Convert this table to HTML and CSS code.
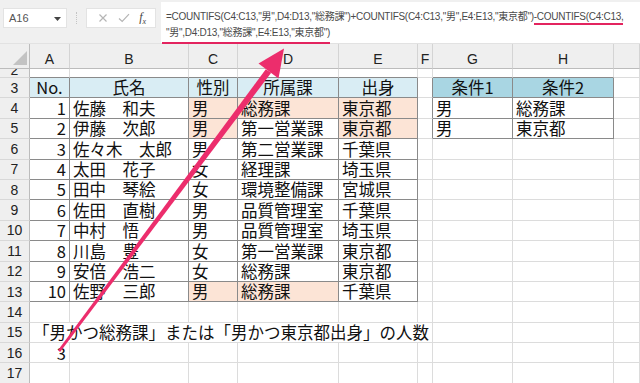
FILE: index.html
```html
<!DOCTYPE html>
<html lang="ja">
<head>
<meta charset="utf-8">
<link rel="stylesheet" href="styles.css">
</head>
<body>
<div class="app">
  <div class="bar">
    <div class="namebox"><span>A16</span><svg class="dd" width="7" height="4" viewBox="0 0 7 4"><path d="M0 0H7L3.5 4Z" fill="#444"/></svg></div>
    <div class="grip"></div>
    <div class="fxbox">
      <svg width="10" height="10" viewBox="0 0 10 10"><path d="M1.5 1.5L8.5 8.5M8.5 1.5L1.5 8.5" stroke="#b5b5b5" stroke-width="1.2"/></svg>
      <svg width="12" height="10" viewBox="0 0 12 10"><path d="M1 5.5L4.2 8.5L11 1.2" stroke="#b5b5b5" stroke-width="1.2" fill="none"/></svg>
      <span class="fx"><i>f</i><sub>x</sub></span>
    </div>
    <div class="formula">
      <div class="fl">=COUNTIFS(C4:C13,"男",D4:D13,"総務課")+COUNTIFS(C4:C13,"男",E4:E13,"東京都")<span class="ul">-COUNTIFS(C4:C13,</span></div>
      <div class="fl"><span class="ul ul2">"男",D4:D13,"総務課",E4:E13,"東京都")</span></div>
    </div>
  </div>

  <div class="sheet">
    <!-- header row -->
    <div class="h corner"><svg width="14" height="14" viewBox="0 0 14 14"><path d="M14 0V14H0Z" fill="#c3c3c3"/></svg></div>
    <div class="h">A</div><div class="h">B</div><div class="h">C</div><div class="h">D</div><div class="h">E</div><div class="h">F</div><div class="h">G</div><div class="h">H</div><div class="h"></div>

    <!-- row 2 (partly hidden) -->
    <div class="r part"><span>2</span></div>
    <div class="c tt"></div><div class="c tt"></div><div class="c tt"></div><div class="c tt"></div><div class="c tt"></div><div class="c"></div><div class="c tt"></div><div class="c tt"></div><div class="c"></div>

    <!-- row 3 -->
    <div class="r">3</div>
    <div class="c t hd1 ctr">No.</div><div class="c t hd1 ctr">氏名</div><div class="c t hd1 ctr">性別</div><div class="c t hd1 ctr">所属課</div><div class="c t hd1 ctr">出身</div>
    <div class="c tl"></div><div class="c t hd2 ctr">条件1</div><div class="c t hd2 ctr">条件2</div><div class="c"></div>

    <!-- row 4 -->
    <div class="r">4</div>
    <div class="c t num">1</div><div class="c t">佐藤　和夫</div><div class="c t pk">男</div><div class="c t pk">総務課</div><div class="c t pk">東京都</div>
    <div class="c tl"></div><div class="c t">男</div><div class="c t">総務課</div><div class="c"></div>

    <!-- row 5 -->
    <div class="r">5</div>
    <div class="c t num">2</div><div class="c t">伊藤　次郎</div><div class="c t pk">男</div><div class="c t">第一営業課</div><div class="c t pk">東京都</div>
    <div class="c tl"></div><div class="c t">男</div><div class="c t">東京都</div><div class="c"></div>

    <!-- row 6 -->
    <div class="r">6</div>
    <div class="c t num">3</div><div class="c t">佐々木　太郎</div><div class="c t">男</div><div class="c t">第二営業課</div><div class="c t">千葉県</div>
    <div class="c"></div><div class="c"></div><div class="c"></div><div class="c"></div>

    <!-- row 7 -->
    <div class="r">7</div>
    <div class="c t num">4</div><div class="c t">太田　花子</div><div class="c t">女</div><div class="c t">経理課</div><div class="c t">埼玉県</div>
    <div class="c"></div><div class="c"></div><div class="c"></div><div class="c"></div>

    <!-- row 8 -->
    <div class="r">8</div>
    <div class="c t num">5</div><div class="c t">田中　琴絵</div><div class="c t">女</div><div class="c t">環境整備課</div><div class="c t">宮城県</div>
    <div class="c"></div><div class="c"></div><div class="c"></div><div class="c"></div>

    <!-- row 9 -->
    <div class="r">9</div>
    <div class="c t num">6</div><div class="c t">佐田　直樹</div><div class="c t">男</div><div class="c t">品質管理室</div><div class="c t">千葉県</div>
    <div class="c"></div><div class="c"></div><div class="c"></div><div class="c"></div>

    <!-- row 10 -->
    <div class="r">10</div>
    <div class="c t num">7</div><div class="c t">中村　悟</div><div class="c t">男</div><div class="c t">品質管理室</div><div class="c t">埼玉県</div>
    <div class="c"></div><div class="c"></div><div class="c"></div><div class="c"></div>

    <!-- row 11 -->
    <div class="r">11</div>
    <div class="c t num">8</div><div class="c t">川島　豊</div><div class="c t">女</div><div class="c t">第一営業課</div><div class="c t">東京都</div>
    <div class="c"></div><div class="c"></div><div class="c"></div><div class="c"></div>

    <!-- row 12 -->
    <div class="r">12</div>
    <div class="c t num">9</div><div class="c t">安倍　浩二</div><div class="c t">女</div><div class="c t">総務課</div><div class="c t">東京都</div>
    <div class="c"></div><div class="c"></div><div class="c"></div><div class="c"></div>

    <!-- row 13 -->
    <div class="r">13</div>
    <div class="c t num">10</div><div class="c t">佐野　三郎</div><div class="c t pk">男</div><div class="c t pk">総務課</div><div class="c t">千葉県</div>
    <div class="c"></div><div class="c"></div><div class="c"></div><div class="c"></div>

    <!-- row 14 -->
    <div class="r">14</div>
    <div class="c"></div><div class="c"></div><div class="c"></div><div class="c"></div><div class="c"></div><div class="c"></div><div class="c"></div><div class="c"></div><div class="c"></div>

    <!-- row 15 -->
    <div class="r">15</div>
    <div class="c span6">「男かつ総務課」または「男かつ東京都出身」の人数</div><div class="c"></div><div class="c"></div><div class="c"></div>

    <!-- row 16 -->
    <div class="r">16</div>
    <div class="c num">3</div><div class="c"></div><div class="c"></div><div class="c"></div><div class="c"></div><div class="c"></div><div class="c"></div><div class="c"></div><div class="c"></div>

    <!-- row 17 -->
    <div class="r">17</div>
    <div class="c"></div><div class="c"></div><div class="c"></div><div class="c"></div><div class="c"></div><div class="c"></div><div class="c"></div><div class="c"></div><div class="c"></div>
  </div>

  <svg class="arrow" width="640" height="383" viewBox="0 0 640 383">
    <polygon points="60.1,351.9 58.0,350.3 265.8,69.3 271.2,72.7" fill="#ec2d6c"/>
    <polygon points="284,48.5 258.5,63.5 278.5,78.5" fill="#ec2d6c"/>
  </svg>
</div>
</body>
</html>
```

FILE: styles.css
```css
* { box-sizing: border-box; }
html, body { margin: 0; padding: 0; }
body {
  width: 640px;
  height: 383px;
  overflow: hidden;
  background: #ffffff;
  font-family: "Noto Sans CJK JP", "Noto Sans", sans-serif;
  color: #111;
}
.app { position: relative; width: 640px; height: 383px; overflow: hidden; }

/* formula bar */
.bar {
  display: flex;
  align-items: flex-start;
  height: 44px;
  background: #f0f0f0;
  border-bottom: 1px solid #e2e2e2;
}
.namebox {
  margin: 8px 0 0 3px;
  width: 64px;
  height: 20px;
  background: #fff;
  border: 1px solid #e3e3e3;
  display: flex;
  align-items: center;
  justify-content: space-between;
  padding: 0 5px 0 5px;
  font-family: "Liberation Sans", Arial, sans-serif;
  font-size: 11px;
  color: #555;
}
.dd { margin-top: 1px; }
.grip {
  margin: 12px 0 0 9px;
  width: 1px;
  height: 12px;
  border-left: 1px dotted #c4c4c4;
}
.fxbox {
  margin: 8px 0 0 9px;
  width: 70px;
  height: 20px;
  background: #fff;
  border: 1px solid #e3e3e3;
  display: flex;
  align-items: center;
  justify-content: space-around;
  padding: 0 4px 0 6px;
}
.fx {
  font-family: "Liberation Serif", serif;
  font-size: 12px;
  color: #444;
}
.fx sub { font-size: 8px; font-style: italic; }
.formula {
  flex: 1;
  margin: 2px 0 0 5px;
  height: 41px;
  background: #fff;
  padding: 8px 0 0 5px;
  font-family: "Liberation Sans", Arial, "Noto Sans CJK JP", sans-serif;
  font-size: 10px;
  letter-spacing: -0.28px;
  color: #4a4a4a;
}
.fl {
  white-space: nowrap;
  height: 16px;
  line-height: 14px;
}
.ul {
  border-bottom: 2px solid #e3245f;
  padding-bottom: 1px;
}
.ul2 { padding-bottom: 4px; margin-left: -4px; padding-left: 4px; }

/* sheet */
.sheet {
  display: grid;
  grid-template-columns: 30px 40px 119px 49px 101px 79px 15px 80px 101px 1fr;
  grid-template-rows: 25px 9px repeat(15, 20.4px);
  font-size: 16.5px;
}
.h {
  background: #efefef;
  border-right: 1px solid #d4d4d4;
  border-bottom: 1px solid #bcbcbc;
  display: flex;
  align-items: center;
  justify-content: center;
  font-family: "Liberation Sans", Arial, sans-serif;
  font-size: 14px;
  color: #222;
  padding-top: 6px;
}
.corner { justify-content: flex-end; align-items: flex-end; padding: 0 2px 3px 0; border-right-color: #bcbcbc; }
.r {
  background: #efefef;
  border-right: 1px solid #bcbcbc;
  border-bottom: 1px solid #d8d8d8;
  display: flex;
  align-items: center;
  justify-content: center;
  font-family: "Liberation Sans", Arial, sans-serif;
  font-size: 14px;
  color: #222;
}
.r.part { align-items: flex-end; line-height: 14px; overflow: hidden; }
.c {
  border-right: 1px solid #dcdcdc;
  border-bottom: 1px solid #dcdcdc;
  display: flex;
  align-items: center;
  padding: 0 3px;
  white-space: nowrap;
  line-height: 1;
  min-width: 0;
}
.t { border-right-color: #8a8a8a; border-bottom-color: #8a8a8a; }
.tt { border-bottom-color: #8a8a8a; }
.tl { border-right-color: #8a8a8a; }
.hd1 { background: #d9edf4; }
.hd2 { background: #a9d6e3; }
.pk { background: #fce4d6; }
.ctr { justify-content: center; }
.num { justify-content: flex-end; padding-right: 3px; }
.span6 { grid-column: span 6; }

.arrow {
  position: absolute;
  left: 0;
  top: 0;
  pointer-events: none;
}
```
